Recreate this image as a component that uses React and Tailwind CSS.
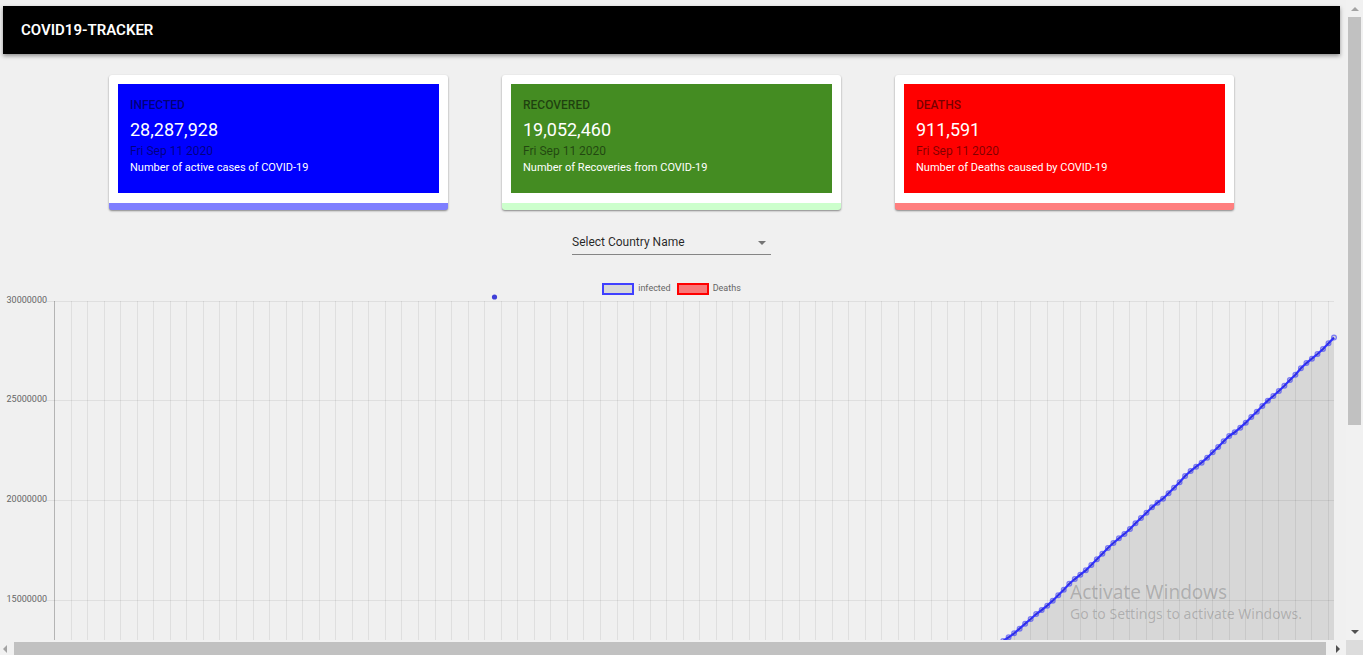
import React from "react";

const cards = [
  {
    title: "INFECTED",
    value: "28,287,928",
    note: "Number of active cases of COVID-19",
    fill: "bg-[#0000ff]",
    edge: "border-[#7f7fff]",
  },
  {
    title: "RECOVERED",
    value: "19,052,460",
    note: "Number of Recoveries from COVID-19",
    fill: "bg-[#448c22]",
    edge: "border-[#ccffcc]",
  },
  {
    title: "DEATHS",
    value: "911,591",
    note: "Number of Deaths caused by COVID-19",
    fill: "bg-[#ff0000]",
    edge: "border-[#ff7f7f]",
  },
];

// Chart geometry: one point per day, newest last, a grid line every third day.
const LEFT = 54.5;
const RIGHT = 1334;
const DAYS = 232;
const STEP = (RIGHT - LEFT) / DAYS;

const heights = [
  337.6, 343.3, 349, 354, 358.7, 363, 368.3, 374.7, 380, 385.7, 391, 396, 400.7, 406, 411.7, 417,
  422.7, 427.7, 432.3, 436, 441.3, 447, 452.3, 457.7, 462.7, 466.7, 471, 476, 482.3, 487.7, 493.3,
  498.7, 502.7, 507.3, 512.7, 518, 523.3, 529, 534, 538.3, 543, 548, 553.7, 559.3, 565, 570.3,
  574.7, 579, 583.7, 589.7, 595.3, 600.7, 605.7, 610, 614, 619, 623.7, 628.7, 633.3, 637.3, 641,
  645,
];
const points = heights.map((y, i) => [RIGHT - i * STEP, y]);
const line = points.map(([x, y]) => `${x.toFixed(1)},${y}`).join(" ");
const area = `${line} ${points[points.length - 1][0].toFixed(1)},650 ${RIGHT},650`;

const columns = Array.from({ length: 78 }, (_, i) => Math.floor(LEFT + i * 3 * STEP) + 0.5);
const rows = [
  { y: 301.5, label: "30000000" },
  { y: 400.5, label: "25000000" },
  { y: 500.5, label: "20000000" },
  { y: 600.5, label: "15000000" },
];

function StatCard({ title, value, note, fill, edge }) {
  return (
    <section
      className={`rounded-[3px] border-b-[7px] bg-white px-[9px] pt-[9px] pb-[10px] shadow-[0_1px_2px_rgba(0,0,0,0.45)] ${edge}`}
    >
      <div className={`px-3 pt-3 pb-[18px] ${fill}`}>
        <h2 className="mb-1 text-[12px] leading-[18px] font-medium text-black/55">{title}</h2>
        <p className="text-[18px] leading-6 text-white">{value}</p>
        <p className="text-[12px] leading-[18px] text-black/50">Fri Sep 11 2020</p>
        <p className="text-[11px] leading-[15px] text-white">{note}</p>
      </div>
    </section>
  );
}

function Chart() {
  return (
    <svg
      viewBox="0 295 1346 345"
      className="block h-auto w-full overflow-visible"
      role="img"
      aria-label="Infected and deaths over time"
    >
      <g stroke="#000" strokeOpacity="0.07" strokeWidth="1">
        {rows.map((r) => (
          <line key={r.y} x1="47" x2={RIGHT} y1={r.y} y2={r.y} />
        ))}
        {columns.slice(1).map((x) => (
          <line key={x} x1={x} x2={x} y1="301" y2="650" />
        ))}
      </g>
      <line x1="54.5" x2="54.5" y1="301" y2="650" stroke="#000" strokeOpacity="0.25" />
      <polygon points={area} fill="#000" fillOpacity="0.1" />
      <polyline points={line} fill="none" stroke="#3333ff" strokeWidth="2.25" />
      {points.map(([x, y]) => (
        <circle
          key={y}
          cx={x}
          cy={y}
          r="2.4"
          fill="#000"
          fillOpacity="0.1"
          stroke="#3333ff"
          strokeOpacity="0.6"
          strokeWidth="1.2"
        />
      ))}
      <circle cx="494.5" cy="297" r="2.6" fill="#3f3fd8" />
      <g fill="#666" fontSize="9" textAnchor="end">
        {rows.map((r) => (
          <text key={r.label} x="47" y={Math.floor(r.y) + 2}>
            {r.label}
          </text>
        ))}
      </g>
    </svg>
  );
}

export default function App() {
  return (
    <div className="grid h-screen grid-cols-[minmax(0,1fr)_17px] grid-rows-[minmax(0,1fr)_15px] bg-[#f0f0f0] font-[Roboto,sans-serif]">
      <main className="relative overflow-hidden">
        <div className="pt-1.5 pr-1.5 pl-[3px]">
          <header className="flex h-12 items-center bg-black px-[18px] shadow-[0_2px_4px_rgba(0,0,0,0.4)]">
            <h1 className="text-[15px] leading-6 font-semibold text-white">COVID19-TRACKER</h1>
          </header>
          <div className="mx-auto mt-[21px] grid max-w-[1125px] grid-cols-3 gap-[54px]">
            {cards.map((c) => (
              <StatCard key={c.title} {...c} />
            ))}
          </div>
          <div className="mt-5 flex justify-center">
            <div className="relative w-[199px]">
              <select
                aria-label="Country"
                className="block h-[25px] w-full appearance-none rounded-none border-b border-[#858585] bg-transparent pr-6 text-[12px] text-black/85 outline-none"
              >
                <option>Select Country Name</option>
              </select>
              <svg
                viewBox="0 0 8 4"
                className="pointer-events-none absolute top-[11px] right-[5px] h-1 w-2"
                aria-hidden="true"
              >
                <path d="M0 0h8L4 4z" fill="#757575" />
              </svg>
            </div>
          </div>
          <div className="mt-7 flex h-3 justify-center gap-1.5 text-[9px] leading-[10px] text-[#666]">
            <span className="flex gap-1">
              <span className="h-3 w-8 border-2 border-[#4040ff] bg-[#d8d8d8]" />
              infected
            </span>
            <span className="flex gap-1">
              <span className="h-3 w-8 border-2 border-[#ff0000] bg-[#f87878]" />
              Deaths
            </span>
          </div>
        </div>
        <Chart />
        <div className="pointer-events-none absolute right-10 bottom-4 w-[236px] font-['Noto_Sans',sans-serif] whitespace-nowrap text-black/20">
          <p className="text-[19px] leading-6">Activate Windows</p>
          <p className="text-[14px] leading-5">Go to Settings to activate Windows.</p>
        </div>
      </main>
      <div className="flex flex-col items-center bg-[#f1f1f1]" aria-hidden="true">
        <div className="flex h-[17px] items-center">
          <svg viewBox="0 0 8 4" className="h-1 w-2">
            <path d="M0 4h8L4 0z" fill="#a3a3a3" />
          </svg>
        </div>
        <div className="grid w-[13px] flex-1 grid-rows-[408fr_198fr]">
          <div className="bg-[#c1c1c1]" />
        </div>
        <div className="flex h-[17px] items-center">
          <svg viewBox="0 0 8 4" className="h-1 w-2">
            <path d="M0 0h8L4 4z" fill="#505050" />
          </svg>
        </div>
      </div>
      <div className="flex bg-[#f1f1f1] pt-0.5" aria-hidden="true">
        <div className="flex w-3.5 items-center pl-[3px]">
          <svg viewBox="0 0 4 8" className="h-2 w-1">
            <path d="M4 0v8L0 4z" fill="#a3a3a3" />
          </svg>
        </div>
        <div className="flex-1 bg-[#c1c1c1]" />
        <div className="flex w-5 items-center justify-center pl-1">
          <svg viewBox="0 0 4 8" className="h-2 w-1">
            <path d="M0 0v8l4-4z" fill="#505050" />
          </svg>
        </div>
      </div>
      <div className="bg-[#dcdcdc]" />
    </div>
  );
}
